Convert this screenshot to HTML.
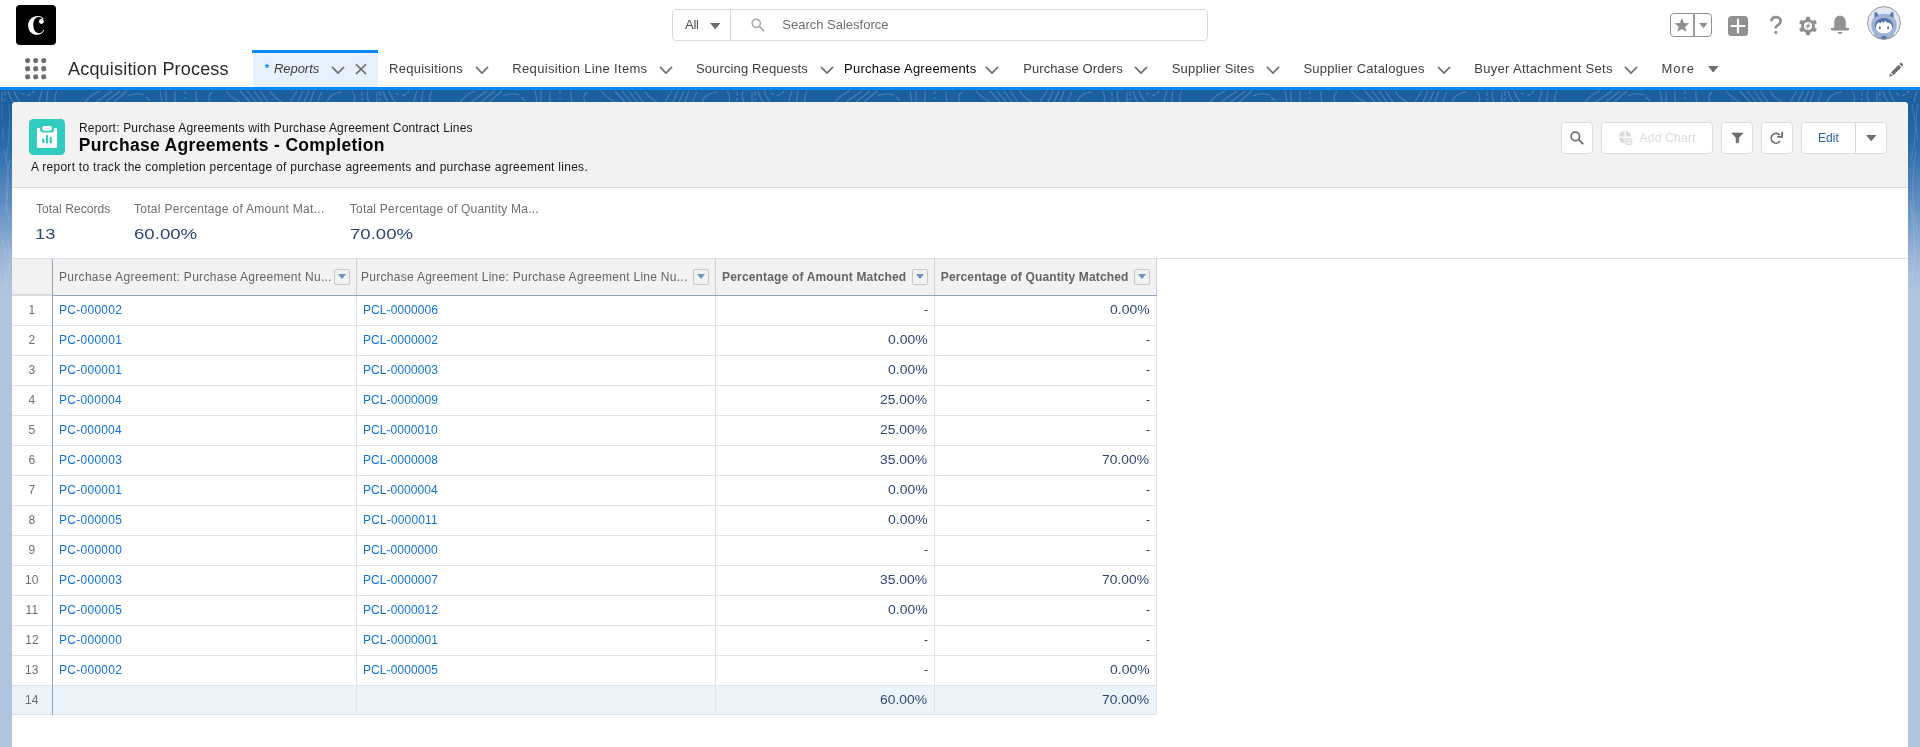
<!DOCTYPE html>
<html lang="en">
<head>
<meta charset="utf-8">
<title>Purchase Agreements - Completion | Salesforce</title>
<style>
*{box-sizing:border-box;margin:0;padding:0}
html,body{width:1920px;height:747px;overflow:hidden}
body{position:relative;background:#b0c4df;font-family:"Liberation Sans",sans-serif;font-size:13px;color:#3e3e3c}
.a{position:absolute}
.t{position:absolute;white-space:nowrap;display:block;line-height:20px;height:20px}
#hdr{left:0;top:0;width:1920px;height:87px;background:#fff}
#bline{left:0;top:87px;width:1920px;height:3px;background:#0d8af8}
#band{left:0;top:90px;width:1920px;height:200px;background:linear-gradient(to bottom,#1b5f9e 0,#1c60a0 10%,#2c6cab 28%,#5f8dc2 56%,#9db6d8 84%,#b0c4df 100%)}
#card{left:12px;top:102px;width:1896px;height:660px;background:#fff;border-radius:4px 4px 0 0;overflow:hidden}
#phead{left:0;top:0;width:1896px;height:86px;background:#f3f2f2;border-bottom:1px solid #dddbda}
.btn{position:absolute;top:20px;height:32px;background:#fff;border:1px solid #dddbda;border-radius:4px}
.hl{position:absolute;height:1px}
.vl{position:absolute;width:1px}
.dd{position:absolute;top:269px;width:16px;height:16px;border:1px solid #c5c7cc;border-radius:2px}
.dd:after{content:"";position:absolute;left:3px;top:4px;border-left:4px solid transparent;border-right:4px solid transparent;border-top:5px solid #6f93c2}
.chev{position:absolute;top:66px;width:13px;height:8px}
</style>
</head>
<body>
<div class="a" id="hdr"></div>
<div class="a" id="bline"></div>
<div class="a" id="band"><svg class="a" style="left:0;top:0" width="1920" height="200" viewBox="0 0 1920 200"><defs><pattern id="topo" width="375" height="200" patternUnits="userSpaceOnUse"><path d="M2 2V12 M5 1V6 M5 8V11 M8 1Q10 8 13 12 M14 1Q16 7 20 12 M21 3l3 2 M27 6l4 -2 M32 3l2 -2 M42 1Q40 6 39 12 M48 1Q47 6 46.5 12 M57 1Q54 6 55 12 M85 12Q92 4 100 1 M96 12L112 1 M106 12L120 1 M114 12L127 1 M128 6Q136 2 144 5 M146 7L150 11 M160 1Q161 6 162 12 M166 1V12 M175 1V12 M185 1V4 M185 7V9 M196 1Q195 6 197 12 M212 2Q207 6 210 12 M226 1Q232 8 240 12 M240 1L250 12 M247 1L256 12 M254 1L262 12 M260 1L268 12 M270 1Q274 8 282 12 M290 12Q294 5 297 1 M298 12L303 1 M304 12L309 1 M310 12L314 1 M318 12Q319 6 322 2 M327 12Q330 3 342 2 M352 1Q356 6 354 12 M362 2V6 M362 8V11 M368 1Q366 6 369 12" fill="none" stroke="#fff" stroke-opacity="0.2" stroke-width="1.15"/></pattern></defs><rect width="1920" height="13" fill="url(#topo)"/><g fill="none" stroke="#fff" stroke-opacity="0.14" stroke-width="1.1"><path d="M2 14V30 M3 36V50 M9 14Q11 40 6 70 M4 60Q12 90 5 120 M10 70Q3 100 9 130 M2 150Q10 170 4 196 M8 150Q12 175 7 198"/><path d="M1912 14Q1919 40 1911 70 M1916 60Q1909 100 1917 140 M1910 110Q1918 150 1912 190 M1918 14Q1914 30 1918 50"/></g></svg></div>

<!-- ===== global header ===== -->
<svg class="a" style="left:16px;top:5px" width="40" height="40" viewBox="0 0 40 40"><rect width="40" height="40" rx="4" fill="#000"/><path d="M28.3 25.2 C26.6 28.3 24.1 29.8 21.2 29.8 C16 29.8 12.1 25.9 12.1 20.4 C12.1 14.8 16.3 10.9 21.8 10.9 C24.6 10.9 26.7 12 27.7 13.8 L26.6 14.4 C25.7 12.7 24.3 11.9 22.6 11.9 C19.3 11.9 17.3 15 17.3 19.8 C17.3 25 19.6 28.2 23 28.2 C24.9 28.2 26.5 27.1 27.6 24.8 Z" fill="#fff"/><circle cx="25.4" cy="16.5" r="2.45" fill="#fff"/></svg>
<div class="a" style="left:672px;top:9px;width:536px;height:32px;border:1px solid #dddbda;border-radius:4px;background:#fff"></div>
<div class="a" style="left:730px;top:10px;width:1px;height:30px;background:#dddbda"></div>
<svg class="a" style="left:710px;top:22.6px" width="10.4" height="6.4" viewBox="0 0 10.4 6.4"><path d="M0 0H10.4L5.2 6.4Z" fill="#706e6b"/></svg>
<svg class="a" style="left:751px;top:18px" width="14" height="14" viewBox="0 0 14 14"><circle cx="5.3" cy="5.3" r="4.1" fill="none" stroke="#a8a6a4" stroke-width="1.5"/><path d="M8.5 8.5 L12.6 12.6" stroke="#a8a6a4" stroke-width="1.7" stroke-linecap="round"/></svg>
<div class="a" style="left:1670px;top:13px;width:42px;height:24px;border:1px solid #919191;border-radius:4px;background:#fff"></div>
<div class="a" style="left:1693px;top:13px;width:2px;height:24px;background:#9b9b9b"></div>
<svg class="a" style="left:0;top:0" width="1920" height="50" viewBox="0 0 1920 50"><polygon points="1681.90,17.90 1683.87,22.89 1689.22,23.22 1685.09,26.64 1686.43,31.83 1681.90,28.95 1677.37,31.83 1678.71,26.64 1674.58,23.22 1679.93,22.89" fill="#8e8e8e"/></svg>
<svg class="a" style="left:1698.6px;top:23.4px" width="8.8" height="5.3" viewBox="0 0 8.8 5.3"><path d="M0 0H8.8L4.4 5.3Z" fill="#8e8e8e"/></svg>
<svg class="a" style="left:1728px;top:16px" width="20" height="20" viewBox="0 0 20 20"><rect width="20" height="20" rx="3.5" fill="#919191"/><path d="M10 3.6V16.4M3.6 10H16.4" stroke="#fff" stroke-width="2.2" stroke-linecap="round"/></svg>
<svg class="a" style="left:1768px;top:14px" width="16" height="22" viewBox="0 0 16 22"><path d="M3.4 7.4 C3.5 4.6 5.4 3.1 8 3.1 C10.7 3.1 12.6 4.7 12.6 7.2 C12.6 9.3 11.3 10.2 9.7 11.2 C8.3 12.1 7.7 12.9 7.7 14.6" fill="none" stroke="#919191" stroke-width="2.7" stroke-linecap="butt"/><rect x="6.3" y="17.1" width="3" height="3" rx="1.1" fill="#919191"/></svg>
<svg class="a" style="left:1798px;top:16px" width="20" height="20" viewBox="-10 -10 20 20"><g fill="#919191"><rect x="-2.1" y="-9.3" width="4.2" height="5" rx="1.3" transform="rotate(0)"/><rect x="-2.1" y="-9.3" width="4.2" height="5" rx="1.3" transform="rotate(60)"/><rect x="-2.1" y="-9.3" width="4.2" height="5" rx="1.3" transform="rotate(120)"/><rect x="-2.1" y="-9.3" width="4.2" height="5" rx="1.3" transform="rotate(180)"/><rect x="-2.1" y="-9.3" width="4.2" height="5" rx="1.3" transform="rotate(240)"/><rect x="-2.1" y="-9.3" width="4.2" height="5" rx="1.3" transform="rotate(300)"/><circle r="6.9"/></g><circle r="4.05" fill="#fff"/><path d="M1.2 -3.1 L-2.2 0.6 H-0.3 L-1.1 3.1 L2.2 -0.7 H0.3 Z" fill="#919191" stroke="#919191" stroke-width="0.4"/></svg>
<svg class="a" style="left:1830px;top:15px" width="20" height="20" viewBox="0 0 20 20"><path d="M10 0.8 C6.4 0.8 4.3 3.5 4.3 6.8 V11.4 C4.3 12.2 3.6 12.8 2.2 13.1 H1.7 C1.1 13.1 0.9 13.6 0.9 14.2 C0.9 14.9 1.2 15.4 1.8 15.4 H18.2 C18.8 15.4 19.1 14.9 19.1 14.2 C19.1 13.6 18.9 13.1 18.3 13.1 H17.8 C16.4 12.8 15.7 12.2 15.7 11.4 V6.8 C15.7 3.5 13.6 0.8 10 0.8Z" fill="#919191"/><path d="M7.6 16.9 H12.4 C12.1 18.3 11.2 19 10 19 C8.8 19 7.9 18.3 7.6 16.9Z" fill="#919191"/></svg>
<svg class="a" style="left:1867px;top:6px" width="34" height="34" viewBox="0 0 34 34"><defs><clipPath id="avc"><circle cx="17" cy="17" r="16.3"/></clipPath></defs><circle cx="17" cy="17" r="16.4" fill="#e4e9f2"/><g clip-path="url(#avc)"><path d="M4.3 20 C4.3 11.6 9 7.7 17 7.7 C25 7.7 29.7 11.6 29.7 20 C29.7 24 27.8 26.4 26.6 27.8 L28.4 36 H5.6 L7.4 27.8 C6.2 26.4 4.3 24 4.3 20Z" fill="#a0b3d5"/><path d="M7.2 12.4 C6.5 9 7 6.2 8.2 5.2 C9.9 5.6 11.7 7.6 12.4 10Z" fill="#a0b3d5"/><path d="M7.9 11.2 C7.5 8.8 7.8 7 8.6 6.3 C9.8 6.8 10.9 8.3 11.4 10Z" fill="#5b7bac"/><path d="M26.8 12.4 C27.5 9 27 6.2 25.8 5.2 C24.1 5.6 22.3 7.6 21.6 10Z" fill="#a0b3d5"/><path d="M26.1 11.2 C26.5 8.8 26.2 7 25.4 6.3 C24.2 6.8 23.1 8.3 22.6 10Z" fill="#5b7bac"/><ellipse cx="17" cy="19.6" rx="9.1" ry="7.7" fill="#5475a8"/><path d="M8.9 21.5 C8.9 18.5 10.4 16.5 12.4 16.2 L12.9 17.5 L15.4 15.2 L15.9 16.9 L19 14.6 L19.3 16.6 C22.6 16.4 25.1 18.3 25.1 21.5 C25.1 25 21.6 27.3 17 27.3 C12.4 27.3 8.9 25 8.9 21.5Z" fill="#fff"/><ellipse cx="12.8" cy="21.8" rx="1.05" ry="1.4" fill="#5475a8"/><ellipse cx="21.1" cy="21.9" rx="1.05" ry="1.4" fill="#5475a8"/><ellipse cx="16.8" cy="31.8" rx="2.9" ry="2" fill="#5b7bac"/></g><circle cx="17" cy="17" r="16.4" fill="none" stroke="#8b8d92" stroke-width="0.9"/></svg>
<svg class="a" style="left:25px;top:58px" width="22" height="22" viewBox="0 0 22 22" fill="#706e6b"><circle cx="2.60" cy="2.60" r="2.55"/><circle cx="10.65" cy="2.60" r="2.55"/><circle cx="18.70" cy="2.60" r="2.55"/><circle cx="2.60" cy="10.65" r="2.55"/><circle cx="10.65" cy="10.65" r="2.55"/><circle cx="18.70" cy="10.65" r="2.55"/><circle cx="2.60" cy="18.70" r="2.55"/><circle cx="10.65" cy="18.70" r="2.55"/><circle cx="18.70" cy="18.70" r="2.55"/></svg>
<div class="a" style="left:252px;top:50px;width:126px;height:3px;background:#0d8af8"></div>
<div class="a" style="left:253px;top:53px;width:125px;height:34px;background:#e6f1fd"></div>
<svg class="a" style="left:264px;top:63px" width="6" height="6" viewBox="-3 -3 6 6"><path d="M0 0 L0.00 -2.15 M0 0 L2.04 -0.66 M0 0 L1.26 1.74 M0 0 L-1.26 1.74 M0 0 L-2.04 -0.66" stroke="#0d8af8" stroke-width="1.25" stroke-linecap="butt"/></svg>
<svg class="a" style="left:331.3px;top:65.5px" width="14" height="9.0" viewBox="-1 -1 14 9.0"><path d="M0.4 0.4 L6.0 6.1 L11.6 0.4" fill="none" stroke="#706e6b" stroke-width="1.6" stroke-linecap="round" stroke-linejoin="round"/></svg>
<svg class="a" style="left:474.8px;top:65.5px" width="14" height="9.0" viewBox="-1 -1 14 9.0"><path d="M0.4 0.4 L6.0 6.1 L11.6 0.4" fill="none" stroke="#706e6b" stroke-width="1.6" stroke-linecap="round" stroke-linejoin="round"/></svg>
<svg class="a" style="left:659px;top:65.5px" width="14" height="9.0" viewBox="-1 -1 14 9.0"><path d="M0.4 0.4 L6.0 6.1 L11.6 0.4" fill="none" stroke="#706e6b" stroke-width="1.6" stroke-linecap="round" stroke-linejoin="round"/></svg>
<svg class="a" style="left:820px;top:65.5px" width="14" height="9.0" viewBox="-1 -1 14 9.0"><path d="M0.4 0.4 L6.0 6.1 L11.6 0.4" fill="none" stroke="#706e6b" stroke-width="1.6" stroke-linecap="round" stroke-linejoin="round"/></svg>
<svg class="a" style="left:984.8px;top:65.5px" width="14" height="9.0" viewBox="-1 -1 14 9.0"><path d="M0.4 0.4 L6.0 6.1 L11.6 0.4" fill="none" stroke="#706e6b" stroke-width="1.6" stroke-linecap="round" stroke-linejoin="round"/></svg>
<svg class="a" style="left:1134px;top:65.5px" width="14" height="9.0" viewBox="-1 -1 14 9.0"><path d="M0.4 0.4 L6.0 6.1 L11.6 0.4" fill="none" stroke="#706e6b" stroke-width="1.6" stroke-linecap="round" stroke-linejoin="round"/></svg>
<svg class="a" style="left:1265.7px;top:65.5px" width="14" height="9.0" viewBox="-1 -1 14 9.0"><path d="M0.4 0.4 L6.0 6.1 L11.6 0.4" fill="none" stroke="#706e6b" stroke-width="1.6" stroke-linecap="round" stroke-linejoin="round"/></svg>
<svg class="a" style="left:1437px;top:65.5px" width="14" height="9.0" viewBox="-1 -1 14 9.0"><path d="M0.4 0.4 L6.0 6.1 L11.6 0.4" fill="none" stroke="#706e6b" stroke-width="1.6" stroke-linecap="round" stroke-linejoin="round"/></svg>
<svg class="a" style="left:1624px;top:65.5px" width="14" height="9.0" viewBox="-1 -1 14 9.0"><path d="M0.4 0.4 L6.0 6.1 L11.6 0.4" fill="none" stroke="#706e6b" stroke-width="1.6" stroke-linecap="round" stroke-linejoin="round"/></svg>
<svg class="a" style="left:355px;top:63px" width="12" height="12" viewBox="0 0 12 12"><path d="M1.4 1.6 L10.6 10.6 M10.6 1.6 L1.4 10.6" stroke="#706e6b" stroke-width="1.5" stroke-linecap="round"/></svg>
<svg class="a" style="left:1708px;top:65.6px" width="10.4" height="6.6" viewBox="0 0 10.4 6.6"><path d="M0 0H10.4L5.2 6.6Z" fill="#706e6b"/></svg>
<svg class="a" style="left:1888px;top:62px" width="16" height="16" viewBox="0 0 16 16"><path d="M1.2 14.8 L2.2 11.2 L4.8 13.8 Z M3 10.4 L10.6 2.8 L13.2 5.4 L5.6 13 Z M11.4 2 L12.3 1.1 C12.7 0.7 13.3 0.7 13.7 1.1 L14.9 2.3 C15.3 2.7 15.3 3.3 14.9 3.7 L14 4.6 Z" fill="#706e6b"/></svg>

<!-- ===== card ===== -->
<div class="a" id="card">
  <div class="a" id="phead"></div>
</div>
<svg class="a" style="left:29px;top:119px" width="36" height="36" viewBox="0 0 36 36"><rect width="36" height="36" rx="4.5" fill="#2ecbbe"/><path d="M9.4 9 H11.1 V10.5 C11.1 12.3 12.3 13.5 14.1 13.5 H22.2 C24 13.5 25.2 12.3 25.2 10.5 V9 H26.6 C27.5 9 28.1 9.6 28.1 10.5 V27.4 C28.1 28.3 27.5 28.9 26.6 28.9 H9.4 C8.5 28.9 7.9 28.3 7.9 27.4 V10.5 C7.9 9.6 8.5 9 9.4 9Z" fill="#fff"/><rect x="13.2" y="7" width="9.8" height="4.7" rx="2.2" fill="#fff"/><rect x="13.2" y="19.6" width="2.2" height="4.6" rx="1" fill="#2ecbbe"/><rect x="16.9" y="16" width="2.2" height="8.4" rx="1" fill="#2ecbbe"/><rect x="20.6" y="17.8" width="2.2" height="6.6" rx="1" fill="#2ecbbe"/></svg>
<div class="a" style="left:1561px;top:122px;width:32px;height:32px;background:#fff;border:1px solid #dddbda;border-radius:4px;"></div>
<div class="a" style="left:1601px;top:122px;width:112px;height:32px;background:#fff;border:1px solid #dddbda;border-radius:4px;"></div>
<div class="a" style="left:1721px;top:122px;width:32px;height:32px;background:#fff;border:1px solid #dddbda;border-radius:4px;"></div>
<div class="a" style="left:1761px;top:122px;width:32px;height:32px;background:#fff;border:1px solid #dddbda;border-radius:4px;"></div>
<div class="a" style="left:1801px;top:122px;width:86px;height:32px;background:#fff;border:1px solid #dddbda;border-radius:4px;"></div>
<div class="a" style="left:1855px;top:123px;width:1px;height:30px;background:#dddbda"></div>
<svg class="a" style="left:1570px;top:131px" width="14" height="14" viewBox="0 0 14 14"><circle cx="5.4" cy="5.4" r="4.2" fill="none" stroke="#706e6b" stroke-width="1.7"/><path d="M8.7 8.7 L12.7 12.7" stroke="#706e6b" stroke-width="1.9" stroke-linecap="round"/></svg>
<svg class="a" style="left:1618px;top:130px" width="16" height="16" viewBox="0 0 16 16"><path d="M6.6 1 A6.2 6.2 0 0 0 0.8 6.6 H6.6Z M7.8 0.9 V6.6 H13.4 A6.2 6.2 0 0 0 7.8 0.9Z M0.8 7.8 A6.2 6.2 0 0 0 6.6 13.4 V7.8Z M7.8 7.8 V10 A3.6 3.6 0 0 1 10 7.8Z" fill="#dddbda"/><circle cx="10.9" cy="11.6" r="3" fill="#fff" stroke="#dddbda" stroke-width="1.3"/><path d="M9.3 11.6 H12.5 M10.9 10 V13.2" stroke="#dddbda" stroke-width="1"/></svg>
<svg class="a" style="left:1731px;top:132px" width="13" height="12" viewBox="0 0 13 12"><path d="M0.6 1 H12.2 L7.7 5.8 V10.8 H5.1 V5.8 Z" fill="#706e6b" stroke="#706e6b" stroke-width="0.6" stroke-linejoin="round"/></svg>
<svg class="a" style="left:1770px;top:131px" width="14" height="14" viewBox="0 0 14 14"><path d="M9.6 10.55 A4.85 4.85 0 1 1 9.25 3.7" fill="none" stroke="#706e6b" stroke-width="1.7" stroke-linecap="round"/><path d="M7.3 4.9 H11.2 V1.1 H13 V6.7 H7.3 Z" fill="#706e6b"/></svg>
<svg class="a" style="left:1865.8px;top:135px" width="10.4" height="6.3" viewBox="0 0 10.4 6.3"><path d="M0 0H10.4L5.2 6.3Z" fill="#706e6b"/></svg>

<!-- ===== table ===== -->
<div class="hl" style="left:12px;top:258px;width:1896px;background:#dcdfe6"></div>
<div class="a" style="left:12px;top:259px;width:1145px;height:36px;background:#f3f2f2"></div>
<div class="a" style="left:12px;top:686px;width:1145px;height:28px;background:#ecf4fb"></div>
<div class="hl" style="left:12px;top:294px;width:40px;height:2px;background:#dcdcdc"></div>
<div class="hl" style="left:52px;top:295px;width:1105px;background:#90a4c0"></div>
<div class="hl" style="left:12px;top:325px;width:1145px;background:#dde4ee"></div>
<div class="hl" style="left:12px;top:355px;width:1145px;background:#dde4ee"></div>
<div class="hl" style="left:12px;top:385px;width:1145px;background:#dde4ee"></div>
<div class="hl" style="left:12px;top:415px;width:1145px;background:#dde4ee"></div>
<div class="hl" style="left:12px;top:445px;width:1145px;background:#dde4ee"></div>
<div class="hl" style="left:12px;top:475px;width:1145px;background:#dde4ee"></div>
<div class="hl" style="left:12px;top:505px;width:1145px;background:#dde4ee"></div>
<div class="hl" style="left:12px;top:535px;width:1145px;background:#dde4ee"></div>
<div class="hl" style="left:12px;top:565px;width:1145px;background:#dde4ee"></div>
<div class="hl" style="left:12px;top:595px;width:1145px;background:#dde4ee"></div>
<div class="hl" style="left:12px;top:625px;width:1145px;background:#dde4ee"></div>
<div class="hl" style="left:12px;top:655px;width:1145px;background:#dde4ee"></div>
<div class="hl" style="left:12px;top:685px;width:1145px;background:#dde4ee"></div>
<div class="hl" style="left:12px;top:714px;width:1145px;background:#dde4ee"></div>
<div class="vl" style="left:356px;top:259px;height:36px;background:#c8d4e4"></div>
<div class="vl" style="left:356px;top:296px;height:419px;background:#dde4ee"></div>
<div class="vl" style="left:715px;top:259px;height:36px;background:#c8d4e4"></div>
<div class="vl" style="left:715px;top:296px;height:419px;background:#dde4ee"></div>
<div class="vl" style="left:934px;top:259px;height:36px;background:#c8d4e4"></div>
<div class="vl" style="left:934px;top:296px;height:419px;background:#dde4ee"></div>
<div class="vl" style="left:1156px;top:259px;height:36px;background:#c8d4e4"></div>
<div class="vl" style="left:1156px;top:296px;height:419px;background:#dde4ee"></div>
<div class="vl" style="left:52px;top:259px;height:456px;background:#90a4c0"></div>
<div class="dd" style="left:334px"></div>
<div class="dd" style="left:693px"></div>
<div class="dd" style="left:912px"></div>
<div class="dd" style="left:1134px"></div>

<!-- ===== text ===== -->
<div class="a" id="txt" style="left:0;top:0;width:1920px;height:747px;will-change:transform">
<span class="t" style="left:685.00px;top:15px;font-size:13px;color:#514f4d;letter-spacing:-0.250px;">All</span>
<span class="t" style="left:782.25px;top:15px;font-size:13px;color:#706e6b;">Search Salesforce</span>
<span class="t" style="left:68.00px;top:59px;font-size:18px;color:#2b2b2b;letter-spacing:0.194px;">Acquisition Process</span>
<span class="t" style="left:273.90px;top:59px;font-size:13px;color:#3e3e3c;letter-spacing:-0.025px;font-style:italic;">Reports</span>
<span class="t" style="left:389.00px;top:59px;font-size:13px;color:#3e3e3c;letter-spacing:0.273px;">Requisitions</span>
<span class="t" style="left:512.30px;top:59px;font-size:13px;color:#3e3e3c;letter-spacing:0.329px;">Requisition Line Items</span>
<span class="t" style="left:695.95px;top:59px;font-size:13px;color:#3e3e3c;letter-spacing:0.128px;">Sourcing Requests</span>
<span class="t" style="left:844.00px;top:59px;font-size:13px;color:#080707;letter-spacing:0.239px;">Purchase Agreements</span>
<span class="t" style="left:1023.20px;top:59px;font-size:13px;color:#3e3e3c;letter-spacing:0.089px;">Purchase Orders</span>
<span class="t" style="left:1171.75px;top:59px;font-size:13px;color:#3e3e3c;letter-spacing:0.177px;">Supplier Sites</span>
<span class="t" style="left:1303.45px;top:59px;font-size:13px;color:#3e3e3c;letter-spacing:0.222px;">Supplier Catalogues</span>
<span class="t" style="left:1474.30px;top:59px;font-size:13px;color:#3e3e3c;letter-spacing:0.298px;">Buyer Attachment Sets</span>
<span class="t" style="left:1661.50px;top:59px;font-size:13px;color:#3e3e3c;letter-spacing:0.933px;">More</span>
<span class="t" style="left:79.00px;top:118px;font-size:12px;color:#181818;letter-spacing:0.185px;">Report: Purchase Agreements with Purchase Agreement Contract Lines</span>
<span class="t" style="left:78.75px;top:135px;font-size:17.5px;color:#080707;letter-spacing:0.315px;font-weight:700;">Purchase Agreements - Completion</span>
<span class="t" style="left:31.00px;top:157px;font-size:12px;color:#181818;letter-spacing:0.278px;">A report to track the completion percentage of purchase agreements and purchase agreement lines.</span>
<span class="t" style="left:1639.50px;top:128px;font-size:12px;color:#dddbda;letter-spacing:0.250px;">Add Chart</span>
<span class="t" style="left:1818.00px;top:128px;font-size:12px;color:#2a62a8;letter-spacing:0.083px;">Edit</span>
<span class="t" style="left:35.95px;top:199px;font-size:12px;color:#706e6b;letter-spacing:0.087px;">Total Records</span>
<span class="t" style="left:133.95px;top:199px;font-size:12px;color:#706e6b;letter-spacing:0.300px;">Total Percentage of Amount Mat...</span>
<span class="t" style="left:349.75px;top:199px;font-size:12px;color:#706e6b;letter-spacing:0.226px;">Total Percentage of Quantity Ma...</span>
<span class="t" style="left:35.22px;top:224px;font-size:15.5px;color:#2f4873;transform:scaleX(1.1803);transform-origin:0 0;">13</span>
<span class="t" style="left:133.50px;top:224px;font-size:15.5px;color:#2f4873;transform:scaleX(1.2020);transform-origin:0 0;">60.00%</span>
<span class="t" style="left:349.70px;top:224px;font-size:15.5px;color:#2f4873;transform:scaleX(1.1980);transform-origin:0 0;">70.00%</span>
<span class="t" style="left:59.00px;top:267px;font-size:12px;color:#666462;letter-spacing:0.305px;">Purchase Agreement: Purchase Agreement Nu...</span>
<span class="t" style="left:361.00px;top:267px;font-size:12px;color:#666462;letter-spacing:0.279px;">Purchase Agreement Line: Purchase Agreement Line Nu...</span>
<span class="t" style="left:722.05px;top:267px;font-size:12px;color:#666462;letter-spacing:0.167px;font-weight:700;">Percentage of Amount Matched</span>
<span class="t" style="left:940.75px;top:267px;font-size:12px;color:#666462;letter-spacing:0.145px;font-weight:700;">Percentage of Quantity Matched</span>
<span class="t" style="left:28.50px;top:300px;font-size:12px;color:#706e6b;">1</span>
<span class="t" style="left:59.00px;top:300px;font-size:12px;color:#0f74d4;letter-spacing:0.281px;">PC-000002</span>
<span class="t" style="left:363.00px;top:300px;font-size:12px;color:#0f74d4;letter-spacing:0.080px;">PCL-0000006</span>
<span class="t" style="left:924.10px;top:300px;font-size:12px;color:#16325c;">-</span>
<span class="t" style="left:1109.94px;top:300px;font-size:12.5px;color:#2f4873;transform:scaleX(1.1159);transform-origin:0 0;">0.00%</span>
<span class="t" style="left:28.62px;top:330px;font-size:12px;color:#706e6b;">2</span>
<span class="t" style="left:59.00px;top:330px;font-size:12px;color:#0f74d4;letter-spacing:0.281px;">PC-000001</span>
<span class="t" style="left:363.00px;top:330px;font-size:12px;color:#0f74d4;letter-spacing:0.080px;">PCL-0000002</span>
<span class="t" style="left:887.94px;top:330px;font-size:12.5px;color:#2f4873;transform:scaleX(1.1159);transform-origin:0 0;">0.00%</span>
<span class="t" style="left:1146.10px;top:330px;font-size:12px;color:#16325c;">-</span>
<span class="t" style="left:28.62px;top:360px;font-size:12px;color:#706e6b;">3</span>
<span class="t" style="left:59.00px;top:360px;font-size:12px;color:#0f74d4;letter-spacing:0.281px;">PC-000001</span>
<span class="t" style="left:363.00px;top:360px;font-size:12px;color:#0f74d4;letter-spacing:0.080px;">PCL-0000003</span>
<span class="t" style="left:887.94px;top:360px;font-size:12.5px;color:#2f4873;transform:scaleX(1.1159);transform-origin:0 0;">0.00%</span>
<span class="t" style="left:1146.10px;top:360px;font-size:12px;color:#16325c;">-</span>
<span class="t" style="left:28.62px;top:390px;font-size:12px;color:#706e6b;">4</span>
<span class="t" style="left:59.00px;top:390px;font-size:12px;color:#0f74d4;letter-spacing:0.250px;">PC-000004</span>
<span class="t" style="left:363.00px;top:390px;font-size:12px;color:#0f74d4;letter-spacing:0.080px;">PCL-0000009</span>
<span class="t" style="left:880.45px;top:390px;font-size:12.5px;color:#2f4873;transform:scaleX(1.1084);transform-origin:0 0;">25.00%</span>
<span class="t" style="left:1146.10px;top:390px;font-size:12px;color:#16325c;">-</span>
<span class="t" style="left:28.62px;top:420px;font-size:12px;color:#706e6b;">5</span>
<span class="t" style="left:59.00px;top:420px;font-size:12px;color:#0f74d4;letter-spacing:0.250px;">PC-000004</span>
<span class="t" style="left:363.00px;top:420px;font-size:12px;color:#0f74d4;letter-spacing:0.055px;">PCL-0000010</span>
<span class="t" style="left:880.45px;top:420px;font-size:12.5px;color:#2f4873;transform:scaleX(1.1084);transform-origin:0 0;">25.00%</span>
<span class="t" style="left:1146.10px;top:420px;font-size:12px;color:#16325c;">-</span>
<span class="t" style="left:28.62px;top:450px;font-size:12px;color:#706e6b;">6</span>
<span class="t" style="left:59.00px;top:450px;font-size:12px;color:#0f74d4;letter-spacing:0.281px;">PC-000003</span>
<span class="t" style="left:363.00px;top:450px;font-size:12px;color:#0f74d4;letter-spacing:0.080px;">PCL-0000008</span>
<span class="t" style="left:880.45px;top:450px;font-size:12.5px;color:#2f4873;transform:scaleX(1.1084);transform-origin:0 0;">35.00%</span>
<span class="t" style="left:1102.45px;top:450px;font-size:12.5px;color:#2f4873;transform:scaleX(1.1084);transform-origin:0 0;">70.00%</span>
<span class="t" style="left:28.62px;top:480px;font-size:12px;color:#706e6b;">7</span>
<span class="t" style="left:59.00px;top:480px;font-size:12px;color:#0f74d4;letter-spacing:0.281px;">PC-000001</span>
<span class="t" style="left:363.00px;top:480px;font-size:12px;color:#0f74d4;letter-spacing:0.055px;">PCL-0000004</span>
<span class="t" style="left:887.94px;top:480px;font-size:12.5px;color:#2f4873;transform:scaleX(1.1159);transform-origin:0 0;">0.00%</span>
<span class="t" style="left:1146.10px;top:480px;font-size:12px;color:#16325c;">-</span>
<span class="t" style="left:28.62px;top:510px;font-size:12px;color:#706e6b;">8</span>
<span class="t" style="left:59.00px;top:510px;font-size:12px;color:#0f74d4;letter-spacing:0.281px;">PC-000005</span>
<span class="t" style="left:363.00px;top:510px;font-size:12px;color:#0f74d4;letter-spacing:0.155px;">PCL-0000011</span>
<span class="t" style="left:887.94px;top:510px;font-size:12.5px;color:#2f4873;transform:scaleX(1.1159);transform-origin:0 0;">0.00%</span>
<span class="t" style="left:1146.10px;top:510px;font-size:12px;color:#16325c;">-</span>
<span class="t" style="left:28.62px;top:540px;font-size:12px;color:#706e6b;">9</span>
<span class="t" style="left:59.00px;top:540px;font-size:12px;color:#0f74d4;letter-spacing:0.281px;">PC-000000</span>
<span class="t" style="left:363.00px;top:540px;font-size:12px;color:#0f74d4;letter-spacing:0.055px;">PCL-0000000</span>
<span class="t" style="left:924.10px;top:540px;font-size:12px;color:#16325c;">-</span>
<span class="t" style="left:1146.10px;top:540px;font-size:12px;color:#16325c;">-</span>
<span class="t" style="left:25.12px;top:570px;font-size:12px;color:#706e6b;">10</span>
<span class="t" style="left:59.00px;top:570px;font-size:12px;color:#0f74d4;letter-spacing:0.281px;">PC-000003</span>
<span class="t" style="left:363.00px;top:570px;font-size:12px;color:#0f74d4;letter-spacing:0.080px;">PCL-0000007</span>
<span class="t" style="left:880.45px;top:570px;font-size:12.5px;color:#2f4873;transform:scaleX(1.1084);transform-origin:0 0;">35.00%</span>
<span class="t" style="left:1102.45px;top:570px;font-size:12.5px;color:#2f4873;transform:scaleX(1.1084);transform-origin:0 0;">70.00%</span>
<span class="t" style="left:25.62px;top:600px;font-size:12px;color:#706e6b;">11</span>
<span class="t" style="left:59.00px;top:600px;font-size:12px;color:#0f74d4;letter-spacing:0.281px;">PC-000005</span>
<span class="t" style="left:363.00px;top:600px;font-size:12px;color:#0f74d4;letter-spacing:0.080px;">PCL-0000012</span>
<span class="t" style="left:887.94px;top:600px;font-size:12.5px;color:#2f4873;transform:scaleX(1.1159);transform-origin:0 0;">0.00%</span>
<span class="t" style="left:1146.10px;top:600px;font-size:12px;color:#16325c;">-</span>
<span class="t" style="left:25.25px;top:630px;font-size:12px;color:#706e6b;">12</span>
<span class="t" style="left:59.00px;top:630px;font-size:12px;color:#0f74d4;letter-spacing:0.281px;">PC-000000</span>
<span class="t" style="left:363.00px;top:630px;font-size:12px;color:#0f74d4;letter-spacing:0.080px;">PCL-0000001</span>
<span class="t" style="left:924.10px;top:630px;font-size:12px;color:#16325c;">-</span>
<span class="t" style="left:1146.10px;top:630px;font-size:12px;color:#16325c;">-</span>
<span class="t" style="left:25.12px;top:660px;font-size:12px;color:#706e6b;">13</span>
<span class="t" style="left:59.00px;top:660px;font-size:12px;color:#0f74d4;letter-spacing:0.281px;">PC-000002</span>
<span class="t" style="left:363.00px;top:660px;font-size:12px;color:#0f74d4;letter-spacing:0.080px;">PCL-0000005</span>
<span class="t" style="left:924.10px;top:660px;font-size:12px;color:#16325c;">-</span>
<span class="t" style="left:1109.94px;top:660px;font-size:12.5px;color:#2f4873;transform:scaleX(1.1159);transform-origin:0 0;">0.00%</span>
<span class="t" style="left:25.12px;top:690px;font-size:12px;color:#706e6b;">14</span>
<span class="t" style="left:880.45px;top:690px;font-size:12.5px;color:#2f4873;transform:scaleX(1.1084);transform-origin:0 0;">60.00%</span>
<span class="t" style="left:1102.45px;top:690px;font-size:12.5px;color:#2f4873;transform:scaleX(1.1084);transform-origin:0 0;">70.00%</span>
</div>
</body>
</html>
